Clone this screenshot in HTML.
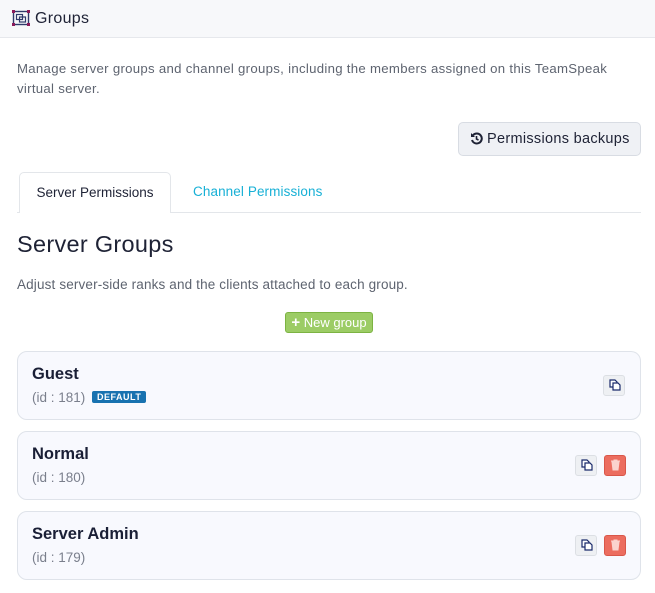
<!DOCTYPE html>
<html><head><meta charset="utf-8"><style>
*{box-sizing:border-box;margin:0;padding:0}
body{width:655px;height:593px;background:#fff;font-family:"Liberation Sans",sans-serif;color:#1e2235;position:relative;overflow:hidden;letter-spacing:.3px}
.abs{position:absolute}
.hdr{left:0;top:0;width:655px;height:38px;background:#f7f8fa;border-bottom:1px solid #e6e8ec}
.card{left:17px;width:624px;height:69px;background:#f8f9fe;border:1px solid #dfe3ea;border-radius:10px}
.card .t{position:absolute;left:14px;top:13px;font-size:16.5px;font-weight:bold;color:#1a1f36;letter-spacing:0}
.card .id{position:absolute;left:14px;top:38px;font-size:13.5px;color:#7a7f8c;letter-spacing:0}
.ib{position:absolute;width:22px;height:21px;border-radius:3px;border:1px solid #dcdfe4;background:#eef0f3;top:23px}
.del{background:#ec6d5f;border-color:#d9574a}
</style></head><body>
<div class="abs hdr"></div>
<svg class="abs" style="left:12px;top:10px" width="18" height="16" viewBox="0 0 18 16"><rect x="1.5" y="1.5" width="15" height="13" fill="none" stroke="#2f3a6b" stroke-width="1.4"/><rect x="4.5" y="4.5" width="6" height="5" fill="none" stroke="#2f3a6b" stroke-width="1.2"/><rect x="7.5" y="7" width="6" height="5" fill="none" stroke="#2f3a6b" stroke-width="1.2"/><g fill="#8b1a5a"><rect x="0" y="0" width="3" height="3"/><rect x="15" y="0" width="3" height="3"/><rect x="0" y="13" width="3" height="3"/><rect x="15" y="13" width="3" height="3"/></g></svg>
<div class="abs" style="left:35px;top:10px;font-size:16px;color:#1e2235">Groups</div>
<div class="abs" style="left:17px;top:59px;width:600px;font-size:13.2px;line-height:20px;color:#5e6470;letter-spacing:.3px">Manage server groups and channel groups, including the members assigned on this TeamSpeak virtual server.</div>
<div class="abs" style="left:458px;top:122px;width:183px;height:34px;background:#eff1f5;border:1px solid #d8dce3;border-radius:5px;font-size:14.5px;line-height:32px;padding-left:28px;color:#1e2235">Permissions backups</div>
<svg class="abs" style="left:470px;top:132px" width="13" height="13" viewBox="0 0 13 13"><path d="M3 3.2A5 5 0 1 1 2 8" fill="none" stroke="#1e2235" stroke-width="2"/><path d="M1 1v4h4z" fill="#1e2235"/><path d="M6.5 4v3l2 1" fill="none" stroke="#1e2235" stroke-width="1.6"/></svg>
<div class="abs" style="left:17px;top:212px;width:624px;height:1px;background:#e3e6ea"></div>
<div class="abs" style="left:19px;top:172px;width:152px;height:41px;background:#fff;border:1px solid #e3e6ea;border-bottom:none;border-radius:5px 5px 0 0;font-size:13.5px;line-height:40px;text-align:center;color:#1e2235;letter-spacing:0">Server Permissions</div>
<div class="abs" style="left:193px;top:184px;font-size:13.5px;color:#17b0d6;letter-spacing:.1px">Channel Permissions</div>
<div class="abs" style="left:17px;top:231px;font-size:23.5px;color:#1e2235">Server Groups</div>
<div class="abs" style="left:17px;top:277px;font-size:13.5px;color:#5e6470;letter-spacing:.15px">Adjust server-side ranks and the clients attached to each group.</div>
<div class="abs" style="left:285px;top:312px;width:88px;height:21px;background:#9ccc65;border:1px solid #7cb342;border-radius:3px;color:#fff;font-size:13px;line-height:19px;text-align:center;letter-spacing:0"><b style="font-size:15px">+</b> New group</div>

<div class="abs card" style="top:351px"><div class="t">Guest</div><div class="id">(id : 181) <span style="display:inline-block;margin-left:3px;background:#1872b0;color:#fff;font-size:9px;font-weight:bold;padding:1px 5px;border-radius:2px;vertical-align:2px;letter-spacing:.5px">DEFAULT</span></div><div class="ib" style="left:585px"></div></div>
<div class="abs card" style="top:431px"><div class="t">Normal</div><div class="id">(id : 180)</div><div class="ib" style="left:557px"></div><div class="ib del" style="left:586px"></div></div>
<div class="abs card" style="top:511px"><div class="t">Server Admin</div><div class="id">(id : 179)</div><div class="ib" style="left:557px"></div><div class="ib del" style="left:586px"></div></div>

<svg class="abs" style="left:609px;top:379px" width="12" height="12" viewBox="0 0 12 12"><path d="M1 1h5l2 2v5H1z" fill="#fff" stroke="#1a2a6b" stroke-width="1.2"/><path d="M4 4h5l2 2v5H4z" fill="#fff" stroke="#1a2a6b" stroke-width="1.2"/></svg>
<svg class="abs" style="left:581px;top:459px" width="12" height="12" viewBox="0 0 12 12"><path d="M1 1h5l2 2v5H1z" fill="#fff" stroke="#1a2a6b" stroke-width="1.2"/><path d="M4 4h5l2 2v5H4z" fill="#fff" stroke="#1a2a6b" stroke-width="1.2"/></svg>
<svg class="abs" style="left:581px;top:539px" width="12" height="12" viewBox="0 0 12 12"><path d="M1 1h5l2 2v5H1z" fill="#fff" stroke="#1a2a6b" stroke-width="1.2"/><path d="M4 4h5l2 2v5H4z" fill="#fff" stroke="#1a2a6b" stroke-width="1.2"/></svg>
<svg class="abs" style="left:610px;top:459px" width="11" height="12" viewBox="0 0 11 12"><path d="M1 2h9M4 2V1h3v1M2 3h7l-1 8H3z" fill="#fbd3cd" stroke="#fbd3cd" stroke-width="1"/></svg>
<svg class="abs" style="left:610px;top:539px" width="11" height="12" viewBox="0 0 11 12"><path d="M1 2h9M4 2V1h3v1M2 3h7l-1 8H3z" fill="#fbd3cd" stroke="#fbd3cd" stroke-width="1"/></svg>
</body></html>
